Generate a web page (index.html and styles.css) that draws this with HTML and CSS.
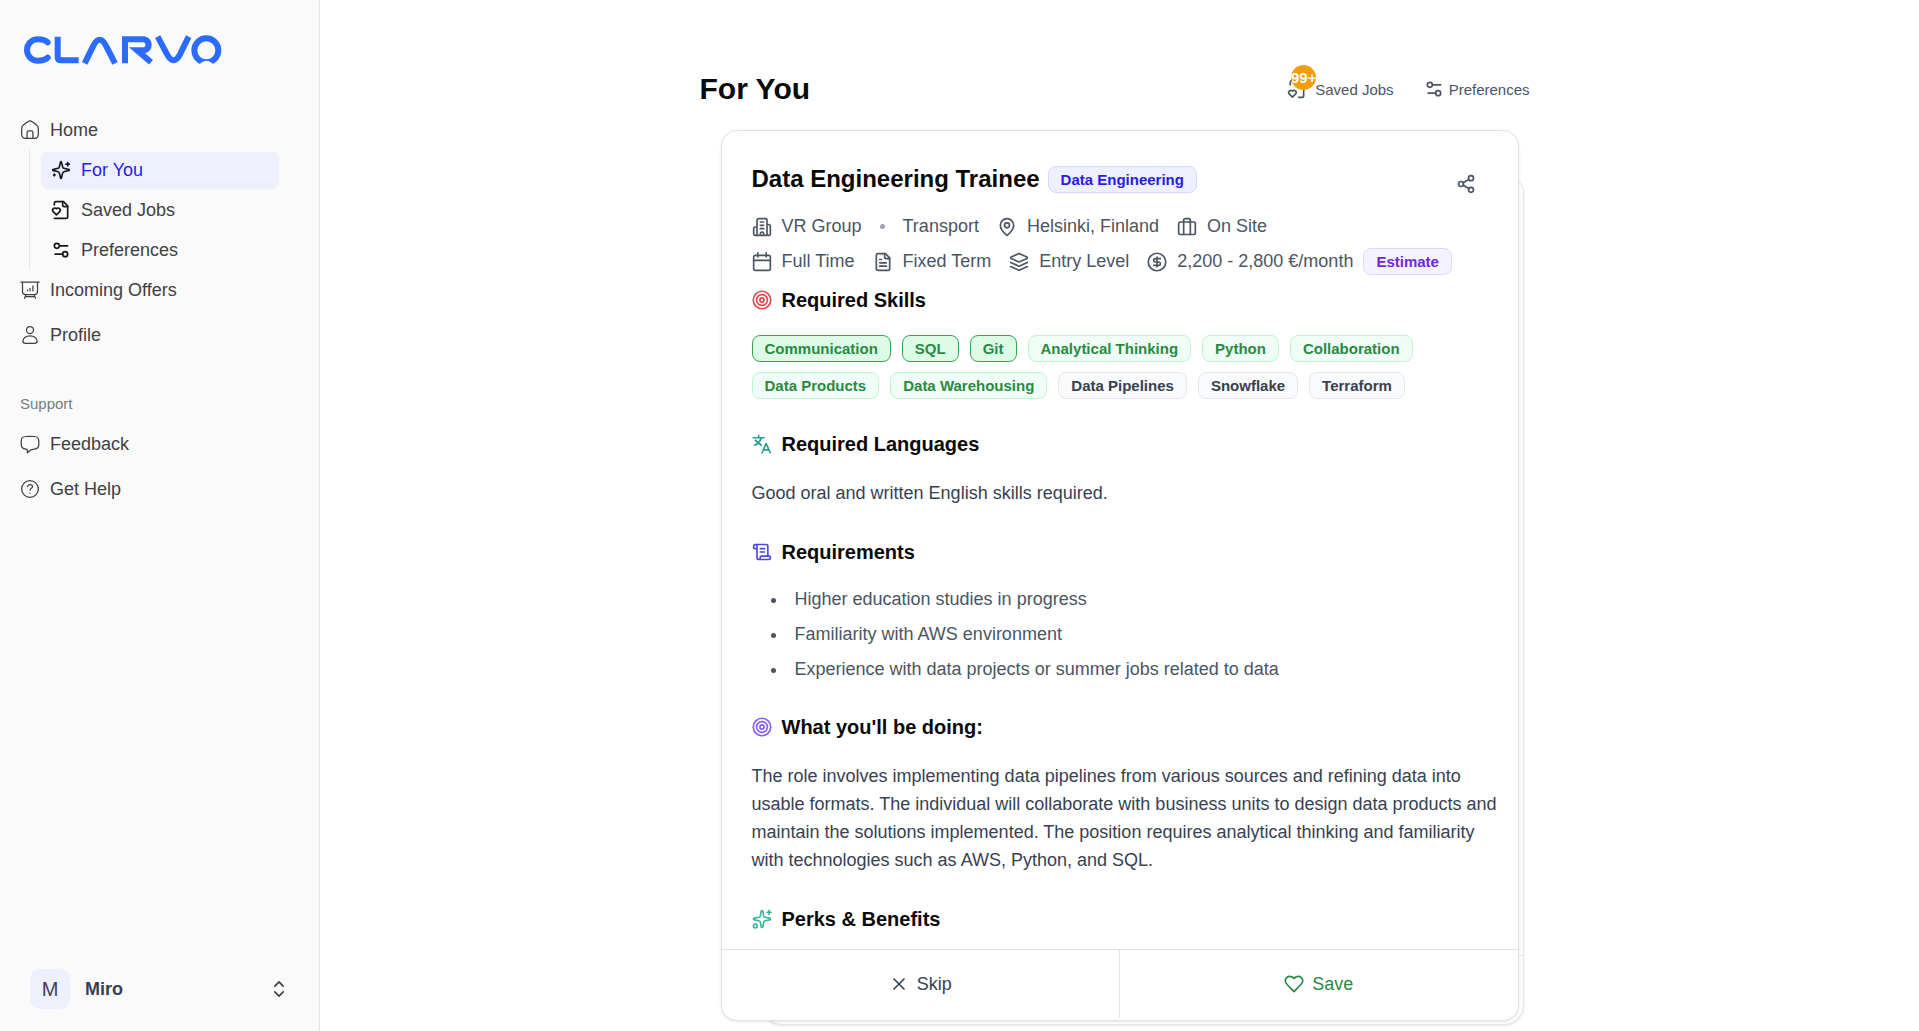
FILE: index.html
```html
<!DOCTYPE html>
<html lang="en">
<head>
  <meta charset="UTF-8" />
  <meta name="viewport" content="width=device-width, initial-scale=1.0"/>
  <title>For You - Clarvo</title>
  <link rel="stylesheet" href="styles.css">
</head>
<body>

  <!-- Shared icons -->
  <svg class="sprite" aria-hidden="true">
    <symbol id="i-sparkles" viewBox="0 0 24 24"><path d="M9.94 15.5A2 2 0 0 0 8.5 14.06l-6.14-1.58a.5.5 0 0 1 0-.96L8.5 9.94A2 2 0 0 0 9.94 8.5l1.58-6.14a.5.5 0 0 1 .96 0L14.06 8.5A2 2 0 0 0 15.5 9.94l6.14 1.58a.5.5 0 0 1 0 .96L15.5 14.06a2 2 0 0 0-1.44 1.44l-1.58 6.14a.5.5 0 0 1-.96 0z"/><path d="M20 3v4M22 5h-4M4 17v2M5 18H3"/></symbol>
    <symbol id="i-settings" viewBox="0 0 24 24"><path d="M20 7h-9M14 17H5"/><circle cx="17" cy="17" r="3"/><circle cx="7" cy="7" r="3"/></symbol>
    <symbol id="i-target" viewBox="0 0 24 24"><circle cx="12" cy="12" r="10.5"/><circle cx="12" cy="12" r="6.5"/><circle cx="12" cy="12" r="2.5"/></symbol>
  </svg>

  <div class="layout">
    <aside class="sidebar">
      <a class="logo" href="#" aria-label="Clarvo">
        <svg viewBox="0 0 630 120" aria-hidden="true">
          <path d="M89 37C82 30 72 28 59 28A32 32 0 0 0 59 92C72 92 82 90 89 83" stroke-linecap="round"/>
          <path d="M119 20V80Q119 91 130 91H182"/>
          <path d="M200 100L225 49Q245 9 265 49L291 100"/>
          <path d="M321 100V28H379A17 17 0 0 1 379 61H357L399 97"/>
          <path d="M419 20L446 71Q467 111 487 71L512 20"/>
          <circle cx="565" cy="61" r="36"/>
          <path class="logo-notch" d="M536 112Q565 72 594 112z"/>
        </svg>
      </a>

      <nav class="nav" aria-label="Main">
        <a class="nav-item" href="#">
          <svg class="icon thin" viewBox="0 0 24 24"><path d="M2 11.5c0-2.3 0-3 1-4.5 1.2-1.4 5-4 6.500-5q2.500-1.800 5 0c1.500 1 5.300 3.600 6.500 5 1 1.500 1 2.200 1 4.500V17q0 5-5 5H7q-5 0-5-5z"/><path d="M8.500 22v-7q0-2 2-2h3q2 0 2 2v7"/></svg>
          Home
        </a>
        <div class="subnav">
          <a class="subnav-item active" href="#" aria-current="page"><svg class="icon"><use href="#i-sparkles"/></svg>For You</a>
          <a class="subnav-item" href="#">
            <svg class="icon" viewBox="0 0 24 24"><path d="M4 22h14a2 2 0 0 0 2-2V7l-5-5H6a2 2 0 0 0-2 2v2"/><path d="M14 2v4a2 2 0 0 0 2 2h4"/><path d="M10.3 10.4a2.46 2.46 0 0 0-3.600-.1l-.2.2-.2-.2a2.460 2.460 0 0 0-3.600.1 2.750 2.750 0 0 0 .2 3.800l3.600 3.600 3.600-3.600a2.750 2.750 0 0 0 .2-3.800z"/></svg>
            Saved Jobs
          </a>
          <a class="subnav-item" href="#"><svg class="icon"><use href="#i-settings"/></svg>Preferences</a>
        </div>
        <a class="nav-item" href="#">
          <svg class="icon thin" viewBox="0 0 24 24"><path d="M1 2.500h22M3 2.500v11q0 4 4 4h10q4 0 4-4v-11M9 13v-1M12 13v-3M15.500 13V7M7 17.500L5.500 22M17 17.500l1.500 4.500M6.500 20h11"/></svg>
          Incoming Offers
        </a>
        <a class="nav-item" href="#">
          <svg class="icon thin" viewBox="0 0 24 24"><circle cx="12" cy="6" r="4.200"/><path d="M3.500 19.500c0-4 4-6.500 8.500-6.500s8.500 2.500 8.500 6.500q0 2.500-3 2.500h-11q-3 0-3-2.500z"/></svg>
          Profile
        </a>
      </nav>

      <h2 class="nav-title">Support</h2>
      <nav class="nav" aria-label="Support">
        <a class="nav-item" href="#">
          <svg class="icon thin" viewBox="0 0 24 24"><path d="M8.500 18.500Q1.500 18 1.500 13V8.500q0-5.300 5-5.500 5.500-.5 11 0 5 .2 5 5.500V13q0 4.500-5 5.200L13 19l-4 3.500z"/></svg>
          Feedback
        </a>
        <a class="nav-item" href="#">
          <svg class="icon thin" viewBox="0 0 24 24"><circle cx="12" cy="12" r="10"/><path d="M9.200 9.200c.6-3.300 5.800-3 5.800 0 0 2-3 2-3 4.300M12 16.800v.4"/></svg>
          Get Help
        </a>
      </nav>

      <button class="account" type="button">
        <span class="avatar">M</span>
        <span class="account-name">Miro</span>
        <svg class="icon" viewBox="0 0 24 24"><path d="M7 15.500l5 5 5-5M7 8.500l5-5 5 5"/></svg>
      </button>
    </aside>

    <main class="main">
      <div class="content">
        <header class="page-header">
          <h1>For You</h1>
          <div class="actions">
            <a class="action saved" href="#">
              <svg class="icon" viewBox="0 0 24 24"><path d="M14 22h4a2 2 0 0 0 2-2V7l-5-5H6a2 2 0 0 0-2 2v3"/><path d="M14 2v4a2 2 0 0 0 2 2h4"/><path d="M10.300 14.400a2.460 2.460 0 0 0-3.600-.1l-.2.2-.2-.2a2.460 2.460 0 0 0-3.600.1 2.750 2.750 0 0 0 .2 3.800l3.600 3.600 3.600-3.600a2.750 2.750 0 0 0 .2-3.800z"/></svg>
              <span class="badge">99+</span>
              Saved Jobs
            </a>
            <a class="action" href="#"><svg class="icon"><use href="#i-settings"/></svg>Preferences</a>
          </div>
        </header>

        <div class="stack">
          <div class="next-card" aria-hidden="true"></div>
          <article class="card">
            <div class="card-body">
              <div class="title-row">
                <h2>Data Engineering Trainee</h2>
                <span class="tag blue">Data Engineering</span>
                <button class="share" type="button" aria-label="Share">
                  <svg class="icon" viewBox="0 0 24 24"><circle cx="18" cy="5" r="3"/><circle cx="6" cy="12" r="3"/><circle cx="18" cy="19" r="3"/><path d="M8.600 13.500l6.800 4M15.400 6.500l-6.800 4"/></svg>
                </button>
              </div>

              <div class="meta">
                <span class="meta-item"><svg class="icon" viewBox="0 0 24 24"><path d="M6 22V4a2 2 0 0 1 2-2h8a2 2 0 0 1 2 2v18zM6 12H4a2 2 0 0 0-2 2v6a2 2 0 0 0 2 2h2M18 9h2a2 2 0 0 1 2 2v9a2 2 0 0 1-2 2h-2M10 6h4M10 10h4M10 14h4M10 22v-2a2 2 0 0 1 4 0v2"/></svg>VR Group</span>
                <span class="dot"></span>
                <span class="meta-item">Transport</span>
                <span class="meta-item"><svg class="icon" viewBox="0 0 24 24"><path d="M20 10c0 5-5.500 10.200-7.400 11.800a1 1 0 0 1-1.200 0C9.500 20.200 4 15 4 10a8 8 0 0 1 16 0"/><circle cx="12" cy="10" r="3"/></svg>Helsinki, Finland</span>
                <span class="meta-item"><svg class="icon" viewBox="0 0 24 24"><rect x="2" y="6" width="20" height="15" rx="2"/><path d="M8 21V4a2 2 0 0 1 2-2h4a2 2 0 0 1 2 2v17"/></svg>On Site</span>
              </div>
              <div class="meta">
                <span class="meta-item"><svg class="icon" viewBox="0 0 24 24"><rect x="2" y="4" width="20" height="18" rx="2"/><path d="M7 1v5M17 1v5M2 10h20"/></svg>Full Time</span>
                <span class="meta-item"><svg class="icon" viewBox="0 0 24 24"><path d="M15 2H6a2 2 0 0 0-2 2v16a2 2 0 0 0 2 2h12a2 2 0 0 0 2-2V7z"/><path d="M14 2v4a2 2 0 0 0 2 2h4M10 9H8M16 13H8M16 17H8"/></svg>Fixed Term</span>
                <span class="meta-item"><svg class="icon" viewBox="0 0 24 24"><path d="M12.800 2.200a2 2 0 0 0-1.600 0L2.600 6.100a1 1 0 0 0 0 1.800l8.600 3.900a2 2 0 0 0 1.600 0l8.600-3.900a1 1 0 0 0 0-1.800zM2 12.500l9.200 4.200a2 2 0 0 0 1.600 0l9.200-4.200M2 17.500l9.200 4.200a2 2 0 0 0 1.600 0l9.200-4.200"/></svg>Entry Level</span>
                <span class="meta-item"><svg class="icon" viewBox="0 0 24 24"><circle cx="12" cy="12" r="10.500"/><path d="M16 8h-6a2 2 0 1 0 0 4h4a2 2 0 1 1 0 4H8M12 18V6"/></svg>2,200 - 2,800 €/month<span class="tag violet">Estimate</span></span>
              </div>

              <section class="section first">
                <h3><svg class="icon red"><use href="#i-target"/></svg>Required Skills</h3>
                <ul class="tags">
                  <li class="tag match">Communication</li>
                  <li class="tag match">SQL</li>
                  <li class="tag match">Git</li>
                  <li class="tag green">Analytical Thinking</li>
                  <li class="tag green">Python</li>
                  <li class="tag green">Collaboration</li>
                  <li class="tag green">Data Products</li>
                  <li class="tag green">Data Warehousing</li>
                  <li class="tag">Data Pipelines</li>
                  <li class="tag">Snowflake</li>
                  <li class="tag">Terraform</li>
                </ul>
              </section>

              <section class="section">
                <h3><svg class="icon teal" viewBox="0 0 24 24"><path d="M1.500 4.500h13M8 4.500V1.500M4 7.500l7 6M11 5.500q-2 5-8 8M12 22.500l5-11 5 11M13.500 19h7"/></svg>Required Languages</h3>
                <p>Good oral and written English skills required.</p>
              </section>

              <section class="section">
                <h3><svg class="icon indigo" viewBox="0 0 24 24"><path d="M15 12h-5M15 8h-5M19 17V5a2 2 0 0 0-2-2H4"/><path d="M8 21h12a2 2 0 0 0 2-2v-1a1 1 0 0 0-1-1H11a1 1 0 0 0-1 1v1a2 2 0 1 1-4 0V5a2 2 0 1 0-4 0v2a1 1 0 0 0 1 1h3"/></svg>Requirements</h3>
                <ul class="list">
                  <li>Higher education studies in progress</li>
                  <li>Familiarity with AWS environment</li>
                  <li>Experience with data projects or summer jobs related to data</li>
                </ul>
              </section>

              <section class="section">
                <h3><svg class="icon purple"><use href="#i-target"/></svg>What you'll be doing:</h3>
                <p>The role involves implementing data pipelines from various sources and refining data into usable formats. The individual will collaborate with business units to design data products and maintain the solutions implemented. The position requires analytical thinking and familiarity with technologies such as AWS, Python, and SQL.</p>
              </section>

              <section class="section">
                <h3><svg class="icon mint" viewBox="0 0 24 24"><path d="M11 2.800a1 1 0 0 1 2 0l1.100 5.600a2 2 0 0 0 1.500 1.500l5.600 1.100a1 1 0 0 1 0 2l-5.600 1.100a2 2 0 0 0-1.500 1.500L13 21.200a1 1 0 0 1-2 0l-1.100-5.600a2 2 0 0 0-1.500-1.500L2.800 13a1 1 0 0 1 0-2l5.600-1.100a2 2 0 0 0 1.500-1.500z"/><path d="M20.500 1.500v5M23 4h-5"/><circle cx="4" cy="20.500" r="2.300"/></svg>Perks &amp; Benefits</h3>
              </section>
            </div>

            <footer class="card-footer">
              <button class="choice" type="button">
                <svg class="icon" viewBox="0 0 24 24"><path d="M18 6L6 18M6 6l12 12"/></svg>
                Skip
              </button>
              <button class="choice save" type="button">
                <svg class="icon" viewBox="0 0 24 24"><path d="M19.500 13.500c1.500-1.500 3-3.200 3-5.500A5.300 5.300 0 0 0 17 2.800c-2 0-3.500.8-5 2.400-1.500-1.600-3-2.400-5-2.400A5.300 5.300 0 0 0 1.500 8c0 2.300 1.500 4 3 5.500l7.500 7.700z"/></svg>
                Save
              </button>
            </footer>
          </article>
        </div>
      </div>
    </main>
  </div>

</body>
</html>
```
FILE: styles.css
```css
* {
  box-sizing: border-box;
}

body {
  margin: 0;
  font-family: "Liberation Sans", Arial, sans-serif;
  font-size: 18px;
  line-height: 25px;
  color: #4b5563;
  background: #fff;
}

h1, h2, h3, p, ul {
  margin: 0;
  padding: 0;
}

a {
  color: inherit;
  text-decoration: none;
}

button {
  padding: 0;
  border: none;
  background: none;
  font: inherit;
  color: inherit;
  cursor: pointer;
}

.sprite {
  display: none;
}

.icon {
  flex: none;
  width: 20px;
  height: 20px;
  fill: none;
  stroke: currentColor;
  stroke-width: 2;
  stroke-linecap: round;
  stroke-linejoin: round;
}
.icon.thin {
  stroke-width: 1.5;
}

.layout {
  display: flex;
  height: 100vh;
}

/* Sidebar */
.sidebar {
  display: flex;
  flex-direction: column;
  flex: none;
  width: 320px;
  padding: 30px 40px 22px 20px;
  border-right: 1px solid #e5e5e5;
  background: #fafafa;
  color: #3f3f46;
}

.logo {
  margin: 0 0 40px -2px;
}
.logo svg {
  display: block;
  width: 210px;
  height: 40px;
  fill: none;
  stroke: #2b6cff;
  stroke-width: 18;
}
.logo .logo-notch {
  fill: #fafafa;
  stroke: none;
}

.nav {
  display: flex;
  flex-direction: column;
  gap: 5px;
}

.nav-item {
  display: flex;
  align-items: center;
  gap: 10px;
  height: 40px;
}

.subnav {
  display: flex;
  flex-direction: column;
  gap: 4px;
  margin: -5px 0 -5px 9px;
  padding: 2px 0 2px 11px;
  border-left: 1px solid #e5e5e5;
}

.subnav-item {
  display: flex;
  align-items: center;
  gap: 10px;
  height: 36px;
  padding: 0 10px;
  border-radius: 8px;
}
.subnav-item .icon {
  color: #18181b;
}
.subnav-item.active {
  background: #eef0ff;
  color: #2a1be8;
  box-shadow: 0 1px 2px rgba(0, 0, 0, 0.05);
}

.nav-title {
  margin: 39px 0 10px;
  font-size: 15px;
  line-height: 20px;
  font-weight: normal;
  color: #71807f;
}

.account {
  display: flex;
  align-items: center;
  gap: 15px;
  margin-top: auto;
  margin-right: -10px;
  padding-left: 10px;
  text-align: left;
}

.avatar {
  width: 40px;
  height: 40px;
  border-radius: 10px;
  background: #eef0ff;
  font-size: 20px;
  line-height: 40px;
  text-align: center;
}

.account-name {
  flex: 1;
  font-weight: bold;
  color: #374151;
}

/* Main column */
.main {
  flex: 1;
  padding: 64px 20px 10px;
}

.content {
  display: flex;
  flex-direction: column;
  max-width: 840px;
  height: 100%;
  margin: 0 auto;
}

.page-header {
  display: flex;
  align-items: center;
  justify-content: space-between;
  height: 50px;
  margin-bottom: 16px;
}
.page-header h1 {
  font-size: 30px;
  line-height: 40px;
  color: #0a0a0a;
}

.actions {
  display: flex;
  gap: 10px;
}

.action {
  display: flex;
  align-items: center;
  gap: 5px;
  padding: 0 10px;
  font-size: 15px;
}

.saved {
  position: relative;
  gap: 8px;
}

.badge {
  position: absolute;
  top: -12px;
  left: 14px;
  width: 25px;
  height: 25px;
  border-radius: 50%;
  background: #f59e0b;
  color: #fff;
  font-size: 15px;
  font-weight: bold;
  display: flex;
  align-items: center;
  justify-content: center;
}

/* Card stack */
.stack {
  position: relative;
  flex: 1;
  min-height: 0;
  margin: 0 21px;
}

/* Edge of the next card, seen behind the current one */
.next-card {
  position: absolute;
  top: 44px;
  right: -5px;
  bottom: -4px;
  left: 41px;
  border: 1px solid #e5e5e5;
  border-radius: 20px;
  background: #fff;
  box-shadow: 0 1px 3px rgba(0, 0, 0, 0.1);
}
.next-card::after {
  content: "";
  position: absolute;
  right: 0;
  bottom: 68px;
  left: 0;
  border-top: 1px solid #e5e5e5;
}

.card {
  position: relative;
  display: flex;
  flex-direction: column;
  height: 100%;
  border: 1px solid #e2e2e4;
  border-radius: 16px;
  background: #fff;
  box-shadow: 0 1px 3px rgba(0, 0, 0, 0.1);
  overflow: hidden;
}

.card-body {
  flex: 1;
  min-height: 0;
  padding: 33px 12px 0 30px;
  overflow: hidden;
}

.title-row {
  display: flex;
  align-items: center;
  gap: 8px;
  height: 30px;
  margin-bottom: 19px;
}
.title-row h2 {
  font-size: 24px;
  line-height: 30px;
  color: #0a0a0a;
}

.share {
  display: flex;
  margin-left: auto;
  padding: 10px 30px 0;
}

.meta {
  display: flex;
  flex-wrap: wrap;
  align-items: center;
  gap: 8px 18px;
  min-height: 27px;
  margin-bottom: 8px;
}

.meta-item {
  display: flex;
  align-items: center;
  gap: 10px;
}

.dot {
  width: 5px;
  height: 5px;
  border-radius: 50%;
  background: #9ca3af;
}

.tag {
  padding: 0 12px;
  border: 1px solid #e5e7eb;
  border-radius: 8px;
  background: #f9fafb;
  color: #374151;
  font-size: 15px;
  line-height: 25px;
  font-weight: bold;
  white-space: nowrap;
}
.tag.blue {
  border-color: #d0d8ff;
  background: #eef0ff;
  color: #2a1be8;
}
.tag.violet {
  border-color: #ddd6fe;
  background: #f5f3ff;
  color: #6d28d9;
}
.tag.green {
  border-color: #bbf7d0;
  background: #f0fdf6;
  color: #2a8a43;
}
.tag.match {
  border-color: #34a853;
  background: #dcfce7;
  color: #2a8a43;
}

.section {
  margin-top: 30px;
}
.section.first {
  margin-top: 10px;
}
.section h3 {
  display: flex;
  align-items: center;
  gap: 10px;
  margin-bottom: 20px;
  font-size: 20px;
  line-height: 30px;
  color: #0a0a0a;
}
.section p {
  line-height: 28px;
  color: #374151;
}

.tags {
  display: flex;
  flex-wrap: wrap;
  gap: 10px 11px;
  list-style: none;
}

.list {
  padding-left: 36px;
}
.list li {
  padding-left: 7px;
}
.list li + li {
  margin-top: 10px;
}

.red { color: #e5484d; }
.teal { color: #2a9d8f; }
.indigo { color: #4f46e5; }
.purple { color: #8b5cf6; }
.mint { color: #3bb5a0; }

.card-footer {
  display: flex;
  flex: none;
  height: 71px;
  padding-bottom: 2px;
  border-top: 1px solid #e2e2e4;
}

.choice {
  display: flex;
  flex: 1;
  align-items: center;
  justify-content: center;
  gap: 8px;
  color: #374151;
}
.choice + .choice {
  border-left: 1px solid #e2e2e4;
}
.choice.save {
  color: #2a8a43;
}
```
